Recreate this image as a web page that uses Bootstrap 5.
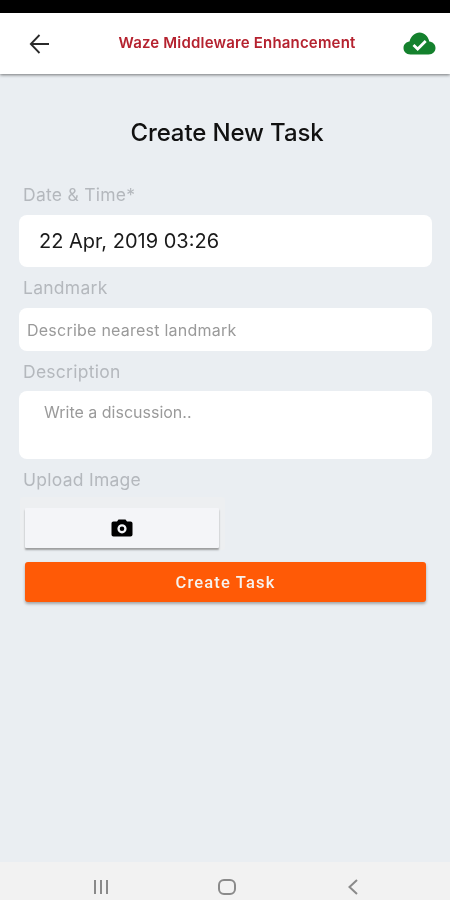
<!DOCTYPE html>
<html lang="en">
<head>
<meta charset="utf-8">
<title>Create New Task</title>
<link href="https://cdn.jsdelivr.net/npm/bootstrap@5.3.0/dist/css/bootstrap.min.css" rel="stylesheet">
<style>
html,body{height:900px;overflow:hidden}
body{background:#eaeef2;font-family:Inter,"Liberation Sans",sans-serif}
.shell{height:900px;width:450px;filter:blur(.5px)}
.statusline{height:13px;background:#000}
.appbar{height:61px;background:#fff;box-shadow:0 1px 3px rgba(0,0,0,.5);padding:0 14px 0 28px;flex:none}
.appbar-title{color:#b5222f;font-size:15px;font-weight:600;letter-spacing:.012em;width:238px;margin-left:66px;white-space:nowrap}
.content{flex:1;min-height:0}
.page-head{font-size:24px;font-weight:500;color:#111;letter-spacing:-.005em;line-height:30px;margin-top:44px;margin-bottom:0;padding-left:4px}
.lbl{color:#b4b8bd;font-size:17.500px;line-height:20px;margin:0 0 0 23px;letter-spacing:.015em;display:block;padding-top:1px;height:20px}
.lbl-first{margin-top:36px}
.fld{background:#fff;border-radius:8px;margin:0 18px 0 19px}
.fld-date{height:52px;font-size:20px;color:#1a1a1a;padding-left:20px;margin-top:11px;margin-bottom:10px}
.fld-land{height:43px;font-size:16px;color:#9a9a9a;padding-left:8px;margin-top:11px;margin-bottom:10px;letter-spacing:.015em}
.fld-desc{height:68px;font-size:16px;line-height:20px;color:#9a9a9a;padding:11px 0 0 25px;margin-top:10px;margin-bottom:10px}
.upload-wrap{width:205px;height:53px;margin:8px 0 12px 20px;padding:11px 6px 2px 5px;background:#edeff1;border-radius:3px}
.upload-btn{height:40px;width:194px;background:#f4f5f8;box-shadow:0 2px 2px rgba(0,0,0,.35);border-radius:1px}
.go-btn{height:40px;margin:0 24px 0 25px;padding-top:2px;background:#ff5a06;border-radius:3px;color:#f6f2ee;font-family:Roboto,sans-serif;font-weight:500;font-size:16.500px;letter-spacing:.07em;box-shadow:0 2px 3px rgba(0,0,0,.3)}
.sysnav{height:38px;background:#f2f2f2;position:relative;flex:none}
.sysnav svg{position:absolute;top:16px}
.spacer{flex:1}
</style>
</head>
<body>
<div class="shell d-flex flex-column">
  <div class="statusline"></div>
  <div class="appbar d-flex align-items-center position-relative">
    <svg width="24" height="24" viewBox="0 0 24 24" fill="none" stroke="#2a2a2a" stroke-width="1.800"><path d="M21 12H3.500M11.500 3 2.800 12l8.700 9"/></svg>
    <div class="appbar-title text-center">Waze Middleware Enhancement</div>
    <svg class="ms-auto" width="33" height="23" viewBox="0 0 33 23"><path fill="#14812d" d="M7.500 22.500C3 22.500.5 19.500.5 16c0-3.500 2.500-6 6-6.500C8 4 12 .5 16.500.5c4.800 0 8.500 3.500 9.800 9 3.700.5 6.200 3 6.200 6.500 0 3.500-2.500 6.500-7 6.500z"/><path fill="none" stroke="#fff" stroke-width="2.800" d="m10.500 13 4.200 4 8-8"/></svg>
  </div>
  <div class="content d-flex flex-column">
    <h1 class="page-head text-center">Create New Task</h1>
    <label class="lbl lbl-first">Date &amp; Time*</label>
    <div class="fld fld-date d-flex align-items-center">22 Apr, 2019 03:26</div>
    <label class="lbl">Landmark</label>
    <div class="fld fld-land d-flex align-items-center">Describe nearest landmark</div>
    <label class="lbl">Description</label>
    <div class="fld fld-desc">Write a discussion..</div>
    <label class="lbl">Upload Image</label>
    <div class="upload-wrap">
      <div class="upload-btn d-flex align-items-center justify-content-center">
        <svg width="22" height="18" viewBox="0 0 22 18"><path fill="#000" fill-rule="evenodd" d="M2.500 2.500H6L7.500.5h7L16 2.500h3.500c1.200 0 2 .8 2 2v11c0 1.200-.8 2-2 2h-17c-1.200 0-2-.8-2-2v-11c0-1.200.8-2 2-2zM11 5.200a4.600 4.600 0 1 0 0 9.200 4.600 4.600 0 0 0 0-9.200zm0 2.300a2.300 2.300 0 1 1 0 4.600 2.300 2.300 0 0 1 0-4.600z"/></svg>
      </div>
    </div>
    <div class="go-btn d-flex align-items-center justify-content-center">Create Task</div>
    <div class="spacer"></div>
    <div class="sysnav">
      <svg style="left:92px" width="18" height="18" viewBox="0 0 18 18" stroke="#8a8a8a" stroke-width="2"><path d="M3 2v14M9 2v14M15 2v14"/></svg>
      <svg style="left:217px" width="20" height="18" viewBox="0 0 20 18" fill="none" stroke="#8a8a8a" stroke-width="2"><rect x="2" y="2" width="16" height="14" rx="5"/></svg>
      <svg style="left:346px" width="14" height="18" viewBox="0 0 14 18" fill="none" stroke="#8a8a8a" stroke-width="2"><path d="M11 2 3.500 9 11 16"/></svg>
    </div>
  </div>
</div>
</body>
</html>
